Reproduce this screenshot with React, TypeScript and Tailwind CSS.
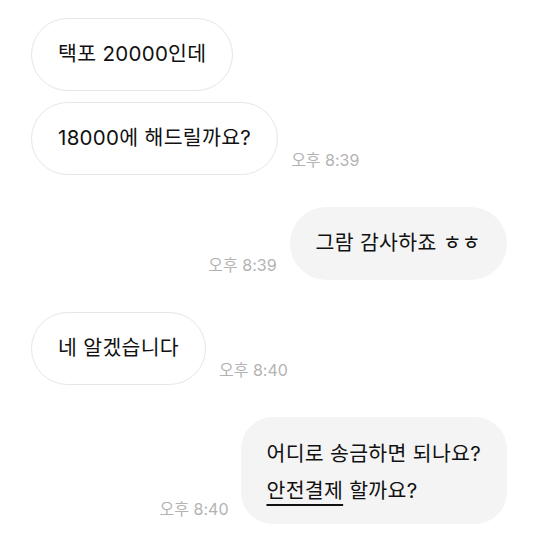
import type { ReactNode } from 'react';

interface Msg {
    id: number;
    mine: boolean;
    time?: string;
    body: ReactNode;
    multi?: boolean;
}

const messages: Msg[] = [
    { id: 1, mine: false, body: '택포 20000인데' },
    { id: 2, mine: false, time: '오후 8:39', body: '18000에 해드릴까요?' },
    { id: 3, mine: true, time: '오후 8:39', body: '그람 감사하죠 ㅎㅎ' },
    { id: 4, mine: false, time: '오후 8:40', body: '네 알겠습니다' },
    {
        id: 5,
        mine: true,
        time: '오후 8:40',
        multi: true,
        body: (
            <>
                어디로 송금하면 되나요?
                <br />
                <span className="underline underline-offset-[6px] decoration-[1.5px]">안전결제</span> 할까요?
            </>
        ),
    },
];

const Time = ({ t }: { t: string }) => (
    <span className="mb-[7px] text-[16px] leading-none text-[#b3b3b3] whitespace-nowrap">{t}</span>
);

export default function App() {
    return (
        <div
            className="w-[538px] h-[538px] bg-white overflow-hidden px-[31px] pt-[18px]"
            style={{ fontFamily: 'Inter, "Noto Sans CJK KR", sans-serif' }}
        >
            <div className="flex flex-col">
                {messages.map((m, i) => {
                    const gap = i === 0 ? '' : i === 1 ? 'mt-[11px]' : 'mt-[32px]';
                    const bubble = m.mine
                        ? 'bg-[#f4f4f4]'
                        : 'bg-white border border-[#e6e6e6]';
                    return (
                        <div
                            key={m.id}
                            className={`flex items-end gap-[13px] ${gap} ${m.mine ? 'justify-end' : 'justify-start'}`}
                        >
                            {m.mine && m.time && <Time t={m.time} />}
                            <div
                                className={`${bubble} text-[#111] text-[20.5px] tracking-[0.3px] font-normal ${
                                    m.multi
                                        ? 'rounded-[32px] pl-[25px] pr-[26px] pt-[18px] pb-[15px] leading-[37px]'
                                        : 'rounded-full px-[26px] h-[73px] flex items-center'
                                }`}
                            >
                                {m.body}
                            </div>
                            {!m.mine && m.time && <Time t={m.time} />}
                        </div>
                    );
                })}
            </div>
        </div>
    );
}
